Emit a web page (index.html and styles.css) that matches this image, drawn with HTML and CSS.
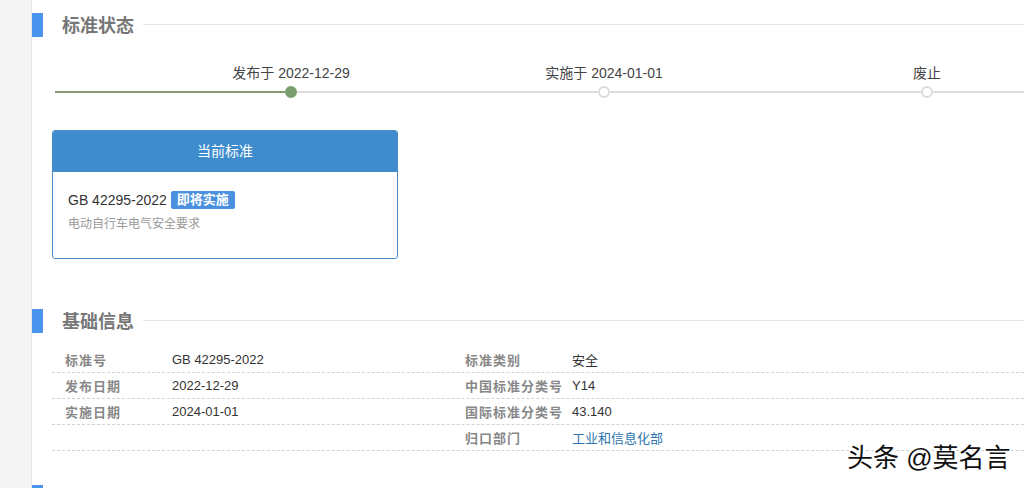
FILE: index.html
```html
<!DOCTYPE html>
<html lang="zh-CN">
<head>
<meta charset="utf-8">
<title>标准详情</title>
<link rel="stylesheet" href="styles.css">
</head>
<body>
<div class="page">
  <aside class="side"></aside>
  <main class="main">
    <section class="sec sec-status">
      <div class="sec-head">
        <span class="sec-bar"></span>
        <h2 class="sec-title">标准状态</h2>
        <span class="sec-line"></span>
      </div>
      <div class="timeline">
        <div class="seg seg-done seg-1"></div>
        <div class="stop">
          <span class="stop-label">发布于 2022-12-29</span>
          <span class="dot dot-done"></span>
        </div>
        <div class="seg seg-2"></div>
        <div class="stop">
          <span class="stop-label">实施于 2024-01-01</span>
          <span class="dot"></span>
        </div>
        <div class="seg seg-3"></div>
        <div class="stop">
          <span class="stop-label">废止</span>
          <span class="dot"></span>
        </div>
        <div class="seg seg-rest"></div>
      </div>
      <div class="card">
        <div class="card-head">当前标准</div>
        <div class="card-body">
          <div class="card-code">GB 42295-2022 <span class="badge">即将实施</span></div>
          <div class="card-desc">电动自行车电气安全要求</div>
        </div>
      </div>
    </section>

    <section class="sec sec-info">
      <div class="sec-head">
        <span class="sec-bar"></span>
        <h2 class="sec-title">基础信息</h2>
        <span class="sec-line"></span>
      </div>
      <div class="info">
        <div class="row">
          <span class="lbl">标准号</span><span class="val">GB 42295-2022</span>
          <span class="lbl">标准类别</span><span class="val">安全</span>
        </div>
        <div class="row">
          <span class="lbl">发布日期</span><span class="val">2022-12-29</span>
          <span class="lbl">中国标准分类号</span><span class="val">Y14</span>
        </div>
        <div class="row">
          <span class="lbl">实施日期</span><span class="val">2024-01-01</span>
          <span class="lbl">国际标准分类号</span><span class="val">43.140</span>
        </div>
        <div class="row">
          <span class="lbl"></span><span class="val"></span>
          <span class="lbl">归口部门</span><span class="val"><a class="link" href="#">工业和信息化部</a></span>
        </div>
      </div>
    </section>

    <section class="sec sec-next">
      <div class="sec-head">
        <span class="sec-bar"></span>
      </div>
    </section>
  </main>
  <div class="watermark">头条 @莫名言</div>
</div>
</body>
</html>
```
FILE: styles.css
```css
html, body {
  margin: 0;
  padding: 0;
  height: 100%;
  overflow: hidden;
  background: #fff;
}
body {
  font-family: "Liberation Sans", Arial, "Noto Sans CJK SC", sans-serif;
  color: #333;
}
.page {
  position: relative;
  display: flex;
  min-height: 100%;
}
.side {
  width: 31px;
  flex: 0 0 31px;
  background: #f4f4f4;
  border-right: 1px solid #e6e6e6;
}
.main {
  flex: 1;
  min-width: 0;
}
.sec-status {
  padding-top: 13px;
}
.sec-head {
  display: flex;
  align-items: center;
  height: 24px;
}
.sec-bar {
  width: 11px;
  height: 24px;
  background: #4a94ee;
  flex: 0 0 11px;
}
.sec-title {
  margin: 0 0 0 19px;
  padding-top: 2px;
  font-size: 18px;
  font-weight: bold;
  color: #777;
  line-height: 22px;
  white-space: nowrap;
}
.sec-line {
  flex: 1;
  height: 1px;
  background: #e4e4e4;
  margin: -1px 0 0 9px;
}
.timeline {
  display: flex;
  align-items: flex-end;
  margin: 26px 0 0 23px;
}
.seg {
  height: 2px;
  background: #dddddd;
  margin-bottom: 5px;
}
.seg-done { background: #8a9a6e; }
.seg-1 { width: 230px; }
.seg-2 { width: 301px; }
.seg-3 { width: 311px; }
.seg-rest { flex: 1; }
.stop {
  width: 12px;
  display: flex;
  flex-direction: column;
  align-items: center;
}
.stop-label {
  white-space: nowrap;
  font-size: 14px;
  line-height: 20px;
  color: #444;
  margin-bottom: 3px;
}
.dot {
  width: 12px;
  height: 12px;
  box-sizing: border-box;
  border-radius: 50%;
  border: 2px solid #dcdcdc;
  background: #fff;
}
.dot-done {
  background: #7a9f6e;
  border-color: #7a9f6e;
}
.card {
  margin: 32px 0 0 20px;
  width: 346px;
  height: 129px;
  box-sizing: border-box;
  border: 1px solid #4b8cc6;
  border-radius: 3px;
  overflow: hidden;
}
.card-head {
  height: 41px;
  background: #3f8ccd;
  color: #fff;
  font-size: 14px;
  line-height: 41px;
  text-align: center;
}
.card-body {
  padding: 18px 15px 0;
}
.card-code {
  font-size: 14px;
  line-height: 20px;
  color: #333;
}
.badge {
  display: inline-block;
  background: #4a90e0;
  color: #fff;
  font-size: 13px;
  font-weight: bold;
  line-height: 18px;
  padding: 0 6px;
  border-radius: 2px;
  vertical-align: 1px;
}
.card-desc {
  margin-top: 5px;
  font-size: 12px;
  line-height: 18px;
  color: #999;
}
.sec-info {
  margin-top: 50px;
}
.info {
  margin: 14px 0 0 20px;
}
.row {
  display: grid;
  grid-template-columns: 120px 280px 120px 1fr;
  height: 25px;
  align-items: center;
  border-bottom: 1px dashed #d2d2d2;
  font-size: 13px;
}
.lbl {
  padding-left: 13px;
  font-weight: bold;
  color: #888;
  letter-spacing: 1px;
  white-space: nowrap;
}
.val {
  color: #333;
  white-space: nowrap;
}
.link {
  color: #2e73ae;
  text-decoration: none;
}
.sec-next {
  margin-top: 34px;
}
.watermark {
  position: absolute;
  left: 847px;
  top: 443px;
  font-size: 26px;
  line-height: 30px;
  color: #111;
  white-space: nowrap;
  text-shadow: 1px 1px 0 #fff, -1px -1px 0 #fff, 1px -1px 0 #fff, -1px 1px 0 #fff;
}
```
